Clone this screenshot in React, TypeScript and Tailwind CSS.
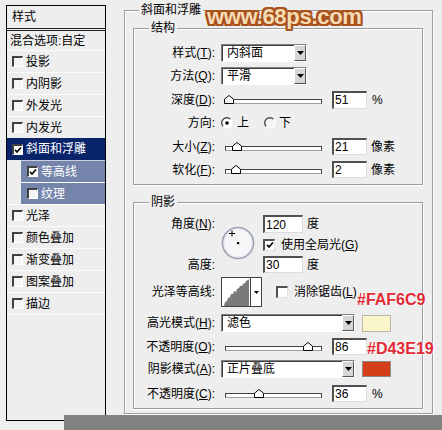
import React from "react";

const Check = () => (
  <svg width="8" height="8" viewBox="0 0 8 8">
    <path d="M1 3.8 L3 6 L7 1.5" fill="none" stroke="#000" strokeWidth="1.7" />
  </svg>
);

function LBox({ checked }: { checked?: boolean }) {
  return (
    <span
      className={`w-[11px] h-[11px] shrink-0 flex items-center justify-center border-t-2 border-l-2 border-r border-b border-t-[#404040] border-l-[#404040] border-r-[#ffffff] border-b-[#ffffff] ${
        checked ? "bg-white" : "bg-[#f6f6f6]"
      }`}
    >
      {checked && <Check />}
    </span>
  );
}

function LRow({ label }: { label: string }) {
  return (
    <div className="h-[22px] flex items-center pl-[5px] gap-[3px] border-t border-t-[#fbfbfb]">
      <LBox />
      <span className="leading-[14px]">{label}</span>
    </div>
  );
}

function Select({ className, value }: { className: string; value: string }) {
  return (
    <div
      className={`h-[18px] flex bg-white border-t border-l border-t-[#808080] border-l-[#808080] border-r border-b border-r-white border-b-white shadow-[inset_1px_1px_0_#404040] ${className}`}
    >
      <div className="flex-1 pl-[5px] flex items-center leading-[14px]">{value}</div>
      <div className="w-[12px] h-full bg-[#d6d6d6] border-t border-l border-t-white border-l-white border-r border-b border-r-[#555] border-b-[#555] flex items-center justify-center">
        <svg width="7" height="4" viewBox="0 0 7 4">
          <path d="M0 0 H7 L3.5 4 Z" fill="#000" />
        </svg>
      </div>
    </div>
  );
}

function Num({ value, className }: { value: string; className: string }) {
  return (
    <div
      className={`bg-white border-t-2 border-l-2 border-t-[#505050] border-l-[#505050] border-r border-b border-r-[#dcdcdc] border-b-[#dcdcdc] pl-[1px] flex items-center leading-[14px] ${className}`}
    >
      {value}
    </div>
  );
}

function Slider({ pos }: { pos: number }) {
  return (
    <div className="relative w-[97px] h-[9px] ml-[4px] flex items-end">
      <div className="w-full h-[5px] bg-white border-t border-l border-t-[#404040] border-l-[#404040] border-b border-r border-b-[#a0a0a0] border-r-[#404040]" />
      <svg
        className="absolute bottom-0"
        style={{ left: pos - 5 }}
        width="10"
        height="9"
        viewBox="0 0 10 9"
      >
        <path d="M0.5 8.5 V4.2 L5 0.5 L9.5 4.2 V8.5 Z" fill="#fff" stroke="#000" />
      </svg>
    </div>
  );
}

function Radio({ on }: { on?: boolean }) {
  return (
    <svg width="12" height="12" viewBox="0 0 12 12" className="shrink-0">
      <circle cx="6" cy="6" r="5" fill={on ? "#ffffff" : "#f4f4f4"} />
      <path d="M2.2 9.5 A5 5 0 0 1 9.5 2.2" fill="none" stroke="#505050" strokeWidth="1.4" />
      <path d="M9.5 2.2 A5 5 0 0 1 2.2 9.5" fill="none" stroke="#ffffff" strokeWidth="1.4" />
      {on && <circle cx="6" cy="6" r="1.8" fill="#000" />}
    </svg>
  );
}

function RBox({ checked }: { checked?: boolean }) {
  return (
    <span className="w-[12px] h-[12px] shrink-0 flex items-center justify-center bg-white border-t-2 border-l-2 border-r border-b border-t-[#505050] border-l-[#505050] border-r-[#e0e0e0] border-b-[#e0e0e0]">
      {checked && <Check />}
    </span>
  );
}

function Label({ children }: { children: React.ReactNode }) {
  return <div className="w-[81px] text-right leading-[14px] shrink-0">{children}</div>;
}

export default function App() {
  return (
    <div className="relative w-[442px] h-[430px] overflow-hidden bg-[#eeeeee] flex items-start text-[12px] text-black font-['Liberation_Sans','Noto_Sans_CJK_SC',sans-serif]">
      {/* Left list */}
      <div className="ml-[6px] mt-[5px] w-[100px] h-[416px] border border-black flex flex-col">
        <div className="h-[25px] flex items-center pl-[5px] border-b-[3px] border-double border-b-[#222]">
          <span className="leading-[14px]">样式</span>
        </div>
        <div className="h-[19px] flex items-center pl-[3px]">
          <span className="leading-[14px]">混合选项:自定</span>
        </div>
        <LRow label="投影" />
        <LRow label="内阴影" />
        <LRow label="外发光" />
        <LRow label="内发光" />
        <div className="h-[22px] flex items-center pl-[5px] gap-[3px] bg-[#0a246a] text-white">
          <LBox checked />
          <span className="leading-[14px]">斜面和浮雕</span>
        </div>
        <div className="ml-[14px] h-[22px] flex items-center pl-[6px] gap-[3px] bg-[#7584ab] text-white border-t border-t-[#c8cfe0]">
          <LBox checked />
          <span className="leading-[14px]">等高线</span>
        </div>
        <div className="ml-[14px] h-[22px] flex items-center pl-[6px] gap-[3px] bg-[#7584ab] text-white border-t border-t-white">
          <LBox />
          <span className="leading-[14px]">纹理</span>
        </div>
        <LRow label="光泽" />
        <LRow label="颜色叠加" />
        <LRow label="渐变叠加" />
        <LRow label="图案叠加" />
        <LRow label="描边" />
        <div className="border-t border-t-[#fbfbfb]" />
      </div>

      {/* Right: 斜面和浮雕 group */}
      <div className="relative ml-[18px] mt-[10px] w-[309px] h-[404px] border border-[#9c9c9c] shadow-[inset_1px_1px_0_#fff,1px_1px_0_#fff] flex flex-col">
        <span className="absolute -top-[8px] left-[14px] px-[2px] bg-[#eeeeee] leading-[14px]">斜面和浮雕</span>

        {/* 结构 */}
        <div className="relative ml-[8px] mt-[17px] w-[290px] h-[157px] border border-[#9c9c9c] shadow-[inset_1px_1px_0_#fff,1px_1px_0_#fff] pt-[12px] flex flex-col">
          <span className="absolute -top-[8px] left-[15px] px-[2px] bg-[#eeeeee] leading-[14px]">结构</span>
          <div className="h-[23px] flex items-center">
            <Label>样式(<u>T</u>):</Label>
            <Select className="ml-[6px] w-[86px]" value="内斜面" />
          </div>
          <div className="h-[24px] flex items-center">
            <Label>方法(<u>Q</u>):</Label>
            <Select className="ml-[6px] w-[86px]" value="平滑" />
          </div>
          <div className="h-[23px] flex items-center">
            <Label>深度(<u>D</u>):</Label>
            <div className="ml-[6px] flex items-center">
              <Slider pos={4} />
              <Num value="51" className="ml-[10px] w-[35px] h-[18px]" />
              <span className="ml-[5px] leading-[14px]">%</span>
            </div>
          </div>
          <div className="h-[24px] flex items-center">
            <Label>方向:</Label>
            <div className="ml-[6px] flex items-center">
              <Radio on />
              <span className="ml-[4px] leading-[14px]">上</span>
              <span className="ml-[15px]">
                <Radio />
              </span>
              <span className="ml-[3px] leading-[14px]">下</span>
            </div>
          </div>
          <div className="h-[23px] flex items-center">
            <Label>大小(<u>Z</u>):</Label>
            <div className="ml-[6px] flex items-center">
              <Slider pos={12} />
              <Num value="21" className="ml-[10px] w-[35px] h-[17px]" />
              <span className="ml-[4px] leading-[14px]">像素</span>
            </div>
          </div>
          <div className="h-[23px] flex items-center">
            <Label>软化(<u>F</u>):</Label>
            <div className="ml-[6px] flex items-center">
              <Slider pos={11} />
              <Num value="2" className="ml-[10px] w-[35px] h-[17px]" />
              <span className="ml-[4px] leading-[14px]">像素</span>
            </div>
          </div>
        </div>

        {/* 阴影 */}
        <div className="relative ml-[8px] mt-[17px] w-[290px] h-[207px] border border-[#9c9c9c] shadow-[inset_1px_1px_0_#fff,1px_1px_0_#fff] pt-[12px] flex flex-col">
          <span className="absolute -top-[8px] left-[15px] px-[2px] bg-[#eeeeee] leading-[14px]">阴影</span>

          <div className="flex">
            <div className="w-[81px] h-[58px] flex flex-col justify-between text-right shrink-0">
              <div className="h-[18px] flex items-center justify-end leading-[14px]">
                角度(<u>N</u>):
              </div>
              <div className="h-[17px] flex items-center justify-end leading-[14px]">高度:</div>
            </div>
            <div className="ml-[6px] mt-[11px] w-[34px] h-[34px]">
              <svg width="34" height="34" viewBox="0 0 34 34">
                <circle cx="17" cy="17" r="15.5" fill="#f6f6f8" stroke="#9aa1b4" strokeWidth="1.6" />
                <circle cx="17" cy="17" r="14.3" fill="none" stroke="#d8dbe4" strokeWidth="0.8" />
                <rect x="16" y="16" width="2.2" height="2.2" fill="#000" />
                <path d="M11 4.5 V10.5 M8 7.5 H14" stroke="#000" strokeWidth="1" />
              </svg>
            </div>
            <div className="ml-[8px] flex flex-col">
              <div className="flex items-center">
                <Num value="120" className="w-[40px] h-[18px]" />
                <span className="ml-[4px] leading-[14px]">度</span>
              </div>
              <div className="h-[23px] flex items-center">
                <RBox checked />
                <span className="ml-[6px] leading-[14px]">
                  使用全局光(<u>G</u>)
                </span>
              </div>
              <div className="flex items-center">
                <Num value="30" className="w-[40px] h-[17px]" />
                <span className="ml-[4px] leading-[14px]">度</span>
              </div>
            </div>
          </div>

          <div className="mt-[4px] h-[30px] flex items-center">
            <Label>光泽等高线:</Label>
            <div className="ml-[6px] flex h-[30px] border border-[#404040] bg-white">
              <svg width="28" height="28" viewBox="0 0 28 28" className="bg-white">
                <polygon
                  points="2,28 3,24 5,23 6,20 8,19 9,16 11,16 12,13 14,14 15,11 17,10 18,8 20,8 21,6 23,5 24,3 26,2 27,1 27,28"
                  fill="#7a7a7a"
                />
              </svg>
              <div className="w-[11px] border-l border-l-[#404040] flex items-center justify-center">
                <svg width="5" height="3" viewBox="0 0 5 3">
                  <path d="M0 0 H5 L2.5 3 Z" fill="#000" />
                </svg>
              </div>
            </div>
            <div className="ml-[14px] flex items-center">
              <RBox />
              <span className="ml-[6px] leading-[14px]">
                消除锯齿(<u>L</u>)
              </span>
            </div>
          </div>

          <div className="mt-[7px] h-[18px] flex items-center">
            <Label>高光模式(<u>H</u>):</Label>
            <Select className="ml-[6px] w-[134px]" value="滤色" />
            <div className="ml-[7px] w-[29px] h-[17px] bg-[#faf6c9] border border-[#b8b8a8]" />
          </div>
          <div className="mt-[6px] h-[17px] flex items-center">
            <Label>不透明度(<u>O</u>):</Label>
            <div className="ml-[6px] flex items-center">
              <Slider pos={83} />
              <Num value="86" className="ml-[10px] w-[35px] h-[17px]" />
            </div>
          </div>
          <div className="mt-[5px] h-[18px] flex items-center">
            <Label>阴影模式(<u>A</u>):</Label>
            <Select className="ml-[6px] w-[134px]" value="正片叠底" />
            <div className="ml-[7px] w-[29px] h-[16px] bg-[#d43e19] border border-[#8a8a8a]" />
          </div>
          <div className="mt-[7px] h-[17px] flex items-center">
            <Label>不透明度(<u>C</u>):</Label>
            <div className="ml-[6px] flex items-center">
              <Slider pos={34} />
              <Num value="36" className="ml-[10px] w-[35px] h-[17px]" />
              <span className="ml-[5px] leading-[14px]">%</span>
            </div>
          </div>
        </div>
      </div>

      {/* overlays */}
      <div className="absolute left-[207px] top-[4px] text-[22px] font-bold leading-[25px] tracking-[-0.3px] text-[#f6dcb4] font-['Liberation_Sans',sans-serif] [text-shadow:2px_0_0_#a8521e,-2px_0_0_#a8521e,0_2px_0_#a8521e,0_-2px_0_#a8521e,2px_2px_0_#a8521e,-2px_-2px_0_#a8521e,2px_-2px_0_#a8521e,-2px_2px_0_#a8521e]">
        www.68ps.com
      </div>
      <div className="absolute left-[357px] top-[291px] text-[16px] font-bold leading-[18px] text-[#e22a36] font-['Liberation_Sans',sans-serif] [text-shadow:0_0_2px_#fff,0_0_2px_#fff]">
        #FAF6C9
      </div>
      <div className="absolute left-[367px] top-[340px] text-[16px] font-bold leading-[18px] text-[#e22a36] font-['Liberation_Sans',sans-serif] [text-shadow:0_0_2px_#fff,0_0_2px_#fff]">
        #D43E19
      </div>
      <div className="absolute left-[64px] right-0 bottom-0 h-[15px] bg-[#828282]" />
    </div>
  );
}
